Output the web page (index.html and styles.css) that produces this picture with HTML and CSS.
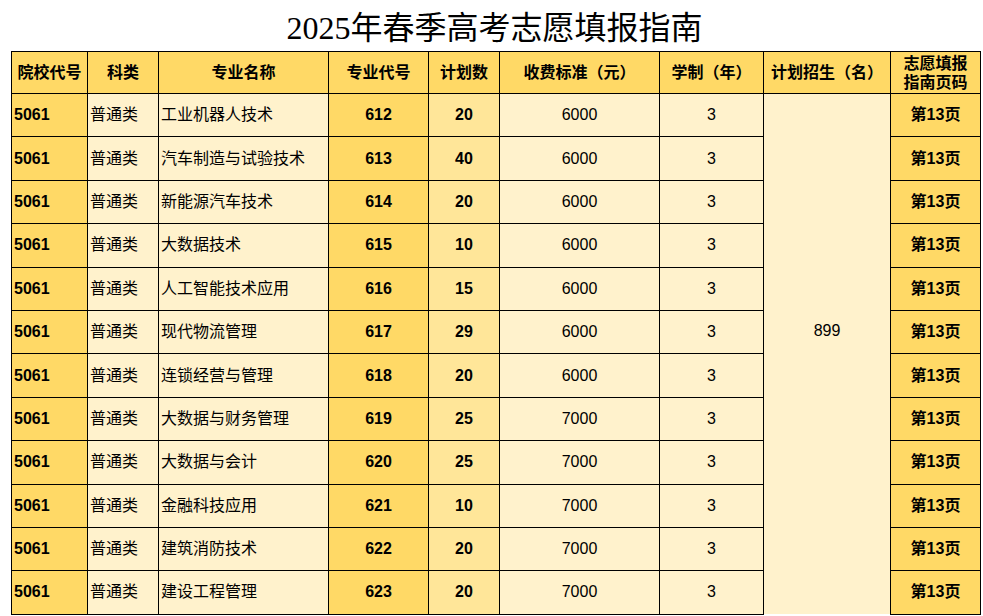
FILE: index.html
```html
<!DOCTYPE html>
<html lang="zh-CN">
<head>
<meta charset="utf-8">
<title>2025年春季高考志愿填报指南</title>
<link rel="stylesheet" href="styles.css">
</head>
<body>
<div class="page">
  <h1 class="title">2025年春季高考志愿填报指南</h1>
  <table class="guide">
    <colgroup>
      <col class="c1"><col class="c2"><col class="c3"><col class="c4"><col class="c5"><col class="c6"><col class="c7"><col class="c8"><col class="c9">
    </colgroup>
    <thead>
      <tr>
        <th class="dark">院校代号</th>
        <th class="dark">科类</th>
        <th class="dark">专业名称</th>
        <th class="dark">专业代号</th>
        <th class="dark">计划数</th>
        <th class="dark">收费标准（元）</th>
        <th class="dark">学制（年）</th>
        <th class="dark">计划招生（名）</th>
        <th class="dark two">志愿填报<br>指南页码</th>
      </tr>
    </thead>
    <tbody>
      <tr>
        <td class="dark bold left">5061</td><td class="light left">普通类</td><td class="light left">工业机器人技术</td><td class="dark bold">612</td><td class="mid bold">20</td><td class="light">6000</td><td class="light">3</td>
        <td class="light merged" rowspan="12">899</td>
        <td class="dark bold">第13页</td>
      </tr>
      <tr><td class="dark bold left">5061</td><td class="light left">普通类</td><td class="light left">汽车制造与试验技术</td><td class="dark bold">613</td><td class="mid bold">40</td><td class="light">6000</td><td class="light">3</td><td class="dark bold">第13页</td></tr>
      <tr><td class="dark bold left">5061</td><td class="light left">普通类</td><td class="light left">新能源汽车技术</td><td class="dark bold">614</td><td class="mid bold">20</td><td class="light">6000</td><td class="light">3</td><td class="dark bold">第13页</td></tr>
      <tr><td class="dark bold left">5061</td><td class="light left">普通类</td><td class="light left">大数据技术</td><td class="dark bold">615</td><td class="mid bold">10</td><td class="light">6000</td><td class="light">3</td><td class="dark bold">第13页</td></tr>
      <tr><td class="dark bold left">5061</td><td class="light left">普通类</td><td class="light left">人工智能技术应用</td><td class="dark bold">616</td><td class="mid bold">15</td><td class="light">6000</td><td class="light">3</td><td class="dark bold">第13页</td></tr>
      <tr><td class="dark bold left">5061</td><td class="light left">普通类</td><td class="light left">现代物流管理</td><td class="dark bold">617</td><td class="mid bold">29</td><td class="light">6000</td><td class="light">3</td><td class="dark bold">第13页</td></tr>
      <tr><td class="dark bold left">5061</td><td class="light left">普通类</td><td class="light left">连锁经营与管理</td><td class="dark bold">618</td><td class="mid bold">20</td><td class="light">6000</td><td class="light">3</td><td class="dark bold">第13页</td></tr>
      <tr><td class="dark bold left">5061</td><td class="light left">普通类</td><td class="light left">大数据与财务管理</td><td class="dark bold">619</td><td class="mid bold">25</td><td class="light">7000</td><td class="light">3</td><td class="dark bold">第13页</td></tr>
      <tr><td class="dark bold left">5061</td><td class="light left">普通类</td><td class="light left">大数据与会计</td><td class="dark bold">620</td><td class="mid bold">25</td><td class="light">7000</td><td class="light">3</td><td class="dark bold">第13页</td></tr>
      <tr><td class="dark bold left">5061</td><td class="light left">普通类</td><td class="light left">金融科技应用</td><td class="dark bold">621</td><td class="mid bold">10</td><td class="light">7000</td><td class="light">3</td><td class="dark bold">第13页</td></tr>
      <tr><td class="dark bold left">5061</td><td class="light left">普通类</td><td class="light left">建筑消防技术</td><td class="dark bold">622</td><td class="mid bold">20</td><td class="light">7000</td><td class="light">3</td><td class="dark bold">第13页</td></tr>
      <tr><td class="dark bold left">5061</td><td class="light left">普通类</td><td class="light left">建设工程管理</td><td class="dark bold">623</td><td class="mid bold">20</td><td class="light">7000</td><td class="light">3</td><td class="dark bold">第13页</td></tr>
    </tbody>
  </table>
</div>
</body>
</html>
```
FILE: styles.css
```css
html, body {
  margin: 0;
  padding: 0;
  background: #ffffff;
}

.page {
  padding: 0 3px 0 11px;
  font-family: "Liberation Sans", "Noto Sans CJK SC", sans-serif;
  color: #000;
}

.title {
  margin: 0;
  height: 51px;
  line-height: 57px;
  text-align: center;
  font-family: "Liberation Serif", "Noto Sans CJK SC", serif;
  font-weight: normal;
  font-size: 32px;
  padding-right: 2px;
}

.guide {
  border-collapse: collapse;
  table-layout: fixed;
  width: 969px;
  font-size: 16px;
}

.c1 { width: 76px; }
.c2 { width: 71px; }
.c3 { width: 170px; }
.c4 { width: 100px; }
.c5 { width: 71px; }
.c6 { width: 160px; }
.c7 { width: 104px; }
.c8 { width: 127px; }
.c9 { width: 90px; }

.guide th,
.guide td {
  border: 1px solid #000;
  padding: 0 2px;
  text-align: center;
  vertical-align: middle;
  white-space: nowrap;
  overflow: hidden;
}

.guide th {
  height: 41px;
  font-size: 16px;
  font-weight: bold;
  line-height: 20px;
}

.guide th.two {
  line-height: 19px;
}

.guide td {
  height: 42.4px;
  font-weight: normal;
  line-height: 18px;
}

.guide td.bold { font-weight: bold; }
.guide td.left { text-align: left; padding-left: 2px; }

.dark { background: #ffd966; }
.mid { background: #ffe699; }
.light { background: #fff2cc; }

.guide td.merged {
  border-bottom-style: hidden;
  padding-bottom: 46px;
}
```
